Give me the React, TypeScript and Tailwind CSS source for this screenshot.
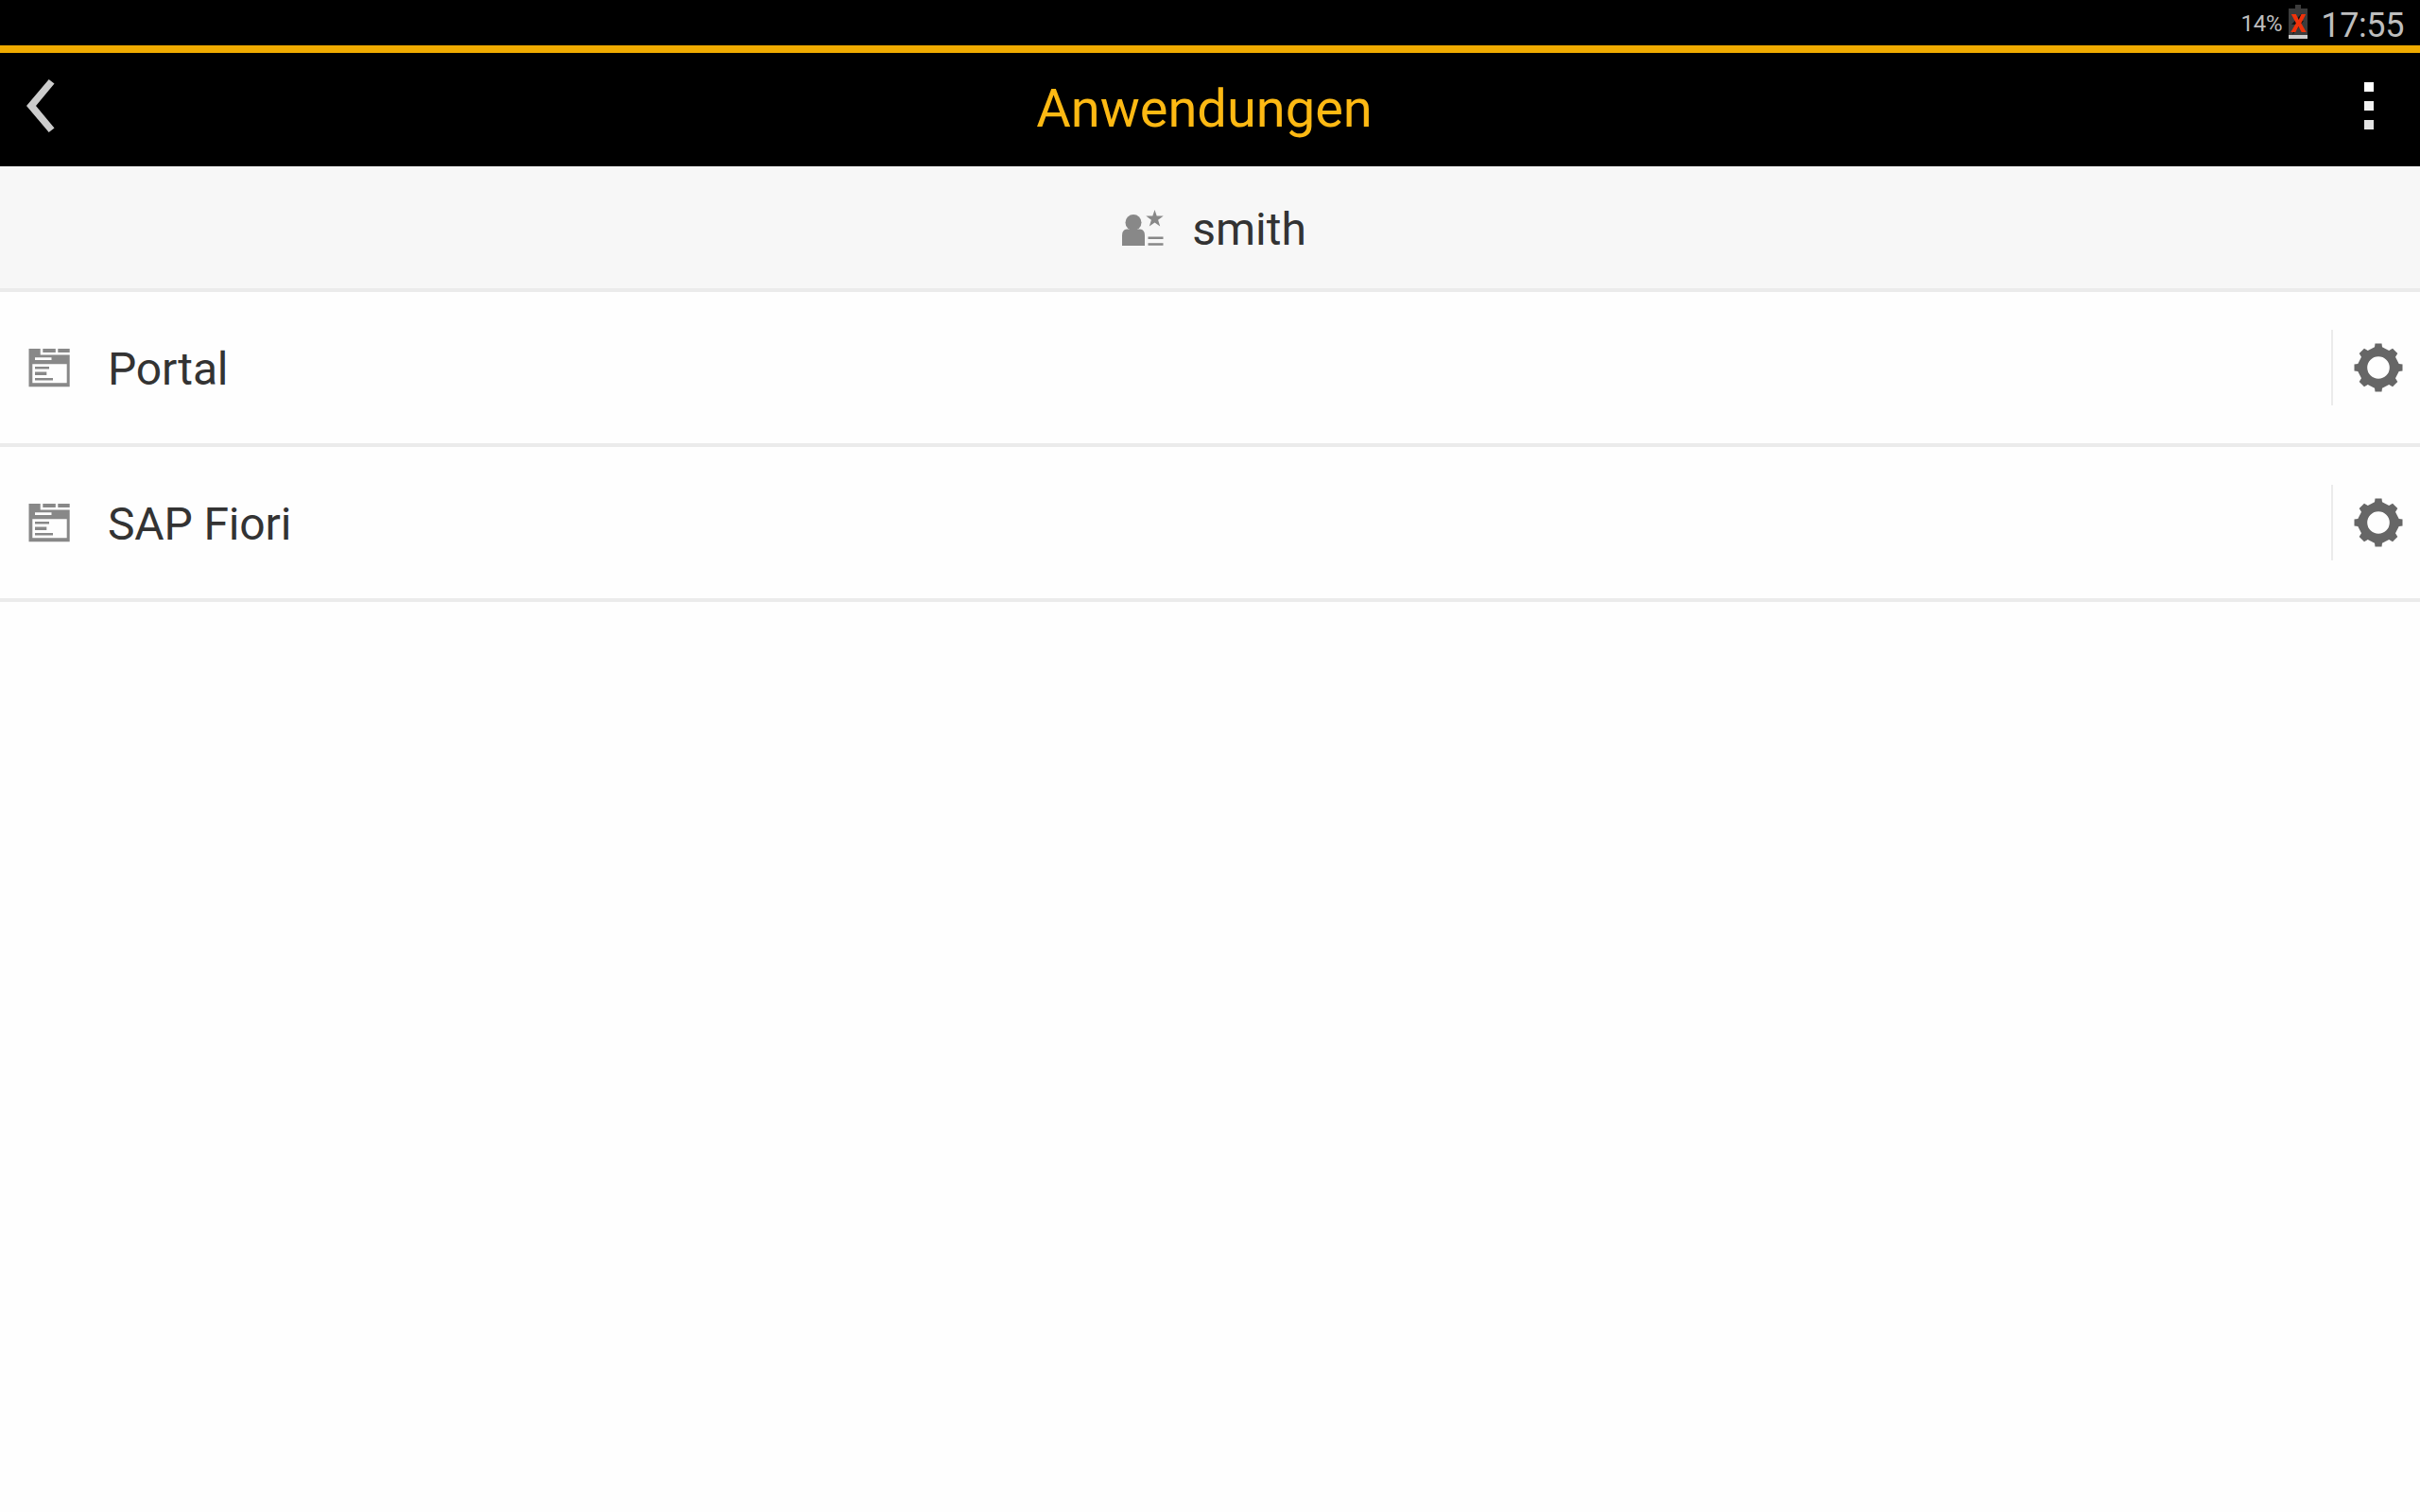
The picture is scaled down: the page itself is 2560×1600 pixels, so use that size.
type App = {
  id: string
  name: string
}

const apps: App[] = [
  { id: 'portal', name: 'Portal' },
  { id: 'fiori', name: 'SAP Fiori' },
]

function BatteryIcon() {
  return (
    <svg className="w-[20px] h-[36px] mt-[5px]" viewBox="0 0 20 36">
      <path d="M7 0h6v4h7v28H0V4h7z" fill="#3c3c3c" />
      <path d="M14 9L3 21h5L4 32l12-15h-5z" fill="#111111" />
      <path d="M0 32h20v4H0z" fill="#cccccc" />
      <path d="M2.800 10h5l2.900 6 2.800-6h4.800l-5 9.500 5.400 9.500h-5l-3.200-6-3.200 6H2.300l5.600-9.500z" fill="#f0320a" />
    </svg>
  )
}

function BackIcon() {
  return (
    <svg className="w-[30px] h-[56px]" viewBox="0 0 30 56" fill="#cccccc">
      <path d="M23.700 0l5.800 4.500L10 28l19.500 23.500L23.700 56 0 28z" />
    </svg>
  )
}

function UserIcon() {
  return (
    <svg className="w-[44px] h-[38px]" viewBox="0 0 44 38" fill="#888888">
      <circle cx="12" cy="13.500" r="8.500" />
      <path d="M0 38V27q0-6 5-6.500h14q5 .5 5 6.500v11z" />
      <path d="M34.500 0l2.200 6.500h7l-5.600 4.200 2.100 6.800-5.700-4.100-5.700 4.100 2.100-6.800L25.300 6.500h7z" />
      <path d="M27.500 28.500h16v2.500h-16zM27.500 35.300h16v2.500h-16z" />
    </svg>
  )
}

function AppIcon() {
  return (
    <svg className="w-[44px] h-[41px]" viewBox="0 0 44 41" fill="#888888">
      <path
        fillRule="evenodd"
        d="M.5 0h12.200v6.500h31V40.300H.5zM7 9.300v2.700h17.500V9.300zM4.300 16.300V36.300h36.400V16.300z"
      />
      <path d="M15.300 0h13.500v4H15.300zM31.300 0h12.400v4H31.300z" />
      <path d="M7 19h15v2.500H7zM7 24.500h12.300v3.500H7zM7 31h19v2.400H7z" />
    </svg>
  )
}

function GearIcon() {
  return (
    <svg className="w-[52px] h-[52px]" viewBox="-26 -26 52 52" fill="#666666">
      <path
        fillRule="evenodd"
        d="M-3.500-25.500H3.500L4-21.700 11.200-18 15-20.300 20.300-15 18-11.200 21.700-4 25.500-3.500V3.500L21.700 4 18 11.200 20.300 15 15 20.300 11.200 18 4 21.700 3.500 25.500H-3.500L-4 21.700-11.200 18-15 20.300-20.300 15-18 11.200-21.700 4-25.500 3.500V-3.500L-21.700-4-18-11.200-20.300-15-15-20.300-11.200-18-4-21.700zM0-11.800A11.800 11.800 0 1 0 0 11.800 11.800 11.800 0 1 0 0-11.800z"
      />
    </svg>
  )
}

function AppRow({ app }: { app: App }) {
  return (
    <li className="flex items-center h-[164px] border-b-4 border-[#ebebeb] pl-[30px]">
      <AppIcon />
      <span className="flex-1 pl-10 pt-[3px] text-[48px] leading-none tracking-[-0.15px]">{app.name}</span>
      <button
        className="flex items-center justify-center w-[94px] h-20 border-l-2 border-[#ebebeb] pl-1"
        aria-label="Einstellungen"
      >
        <GearIcon />
      </button>
    </li>
  )
}

export default function AppsPage() {
  return (
    <div className="min-h-[1600px] bg-[#fefefe] font-['Roboto',sans-serif] text-[#333333]">
      <div className="flex items-start justify-end h-12 pr-[17px] bg-black text-[#bebebe]">
        <span className="text-[24px] leading-[50px] tracking-[-0.2px]">14%</span>
        <span className="ml-[7px]">
          <BatteryIcon />
        </span>
        <span className="ml-[14px] text-[36px] leading-[54px] tracking-[-0.4px]">17:55</span>
      </div>

      <header className="flex items-center justify-between h-32 border-t-8 border-[#f0ab00] bg-black pb-2 pl-7 pr-[49px]">
        <button className="w-[30px]" aria-label="Zurück">
          <BackIcon />
        </button>
        <h1 className="pt-[5px] pr-[11px] text-[56px] leading-none text-[#fdb913]">Anwendungen</h1>
        <button className="flex flex-col gap-[10px]" aria-label="Menü">
          <span className="size-[10px] bg-white" />
          <span className="size-[10px] bg-[#f2f2f2]" />
          <span className="size-[10px] bg-[#e4e4e4]" />
        </button>
      </header>

      <div className="flex items-center justify-center gap-[30px] h-[133px] border-b-4 border-[#ebebeb] bg-[#f7f7f7] pl-[9px]">
        <UserIcon />
        <span className="pt-1 text-[48px] leading-none">smith</span>
      </div>

      <ul>
        {apps.map((app) => (
          <AppRow key={app.id} app={app} />
        ))}
      </ul>
    </div>
  )
}
